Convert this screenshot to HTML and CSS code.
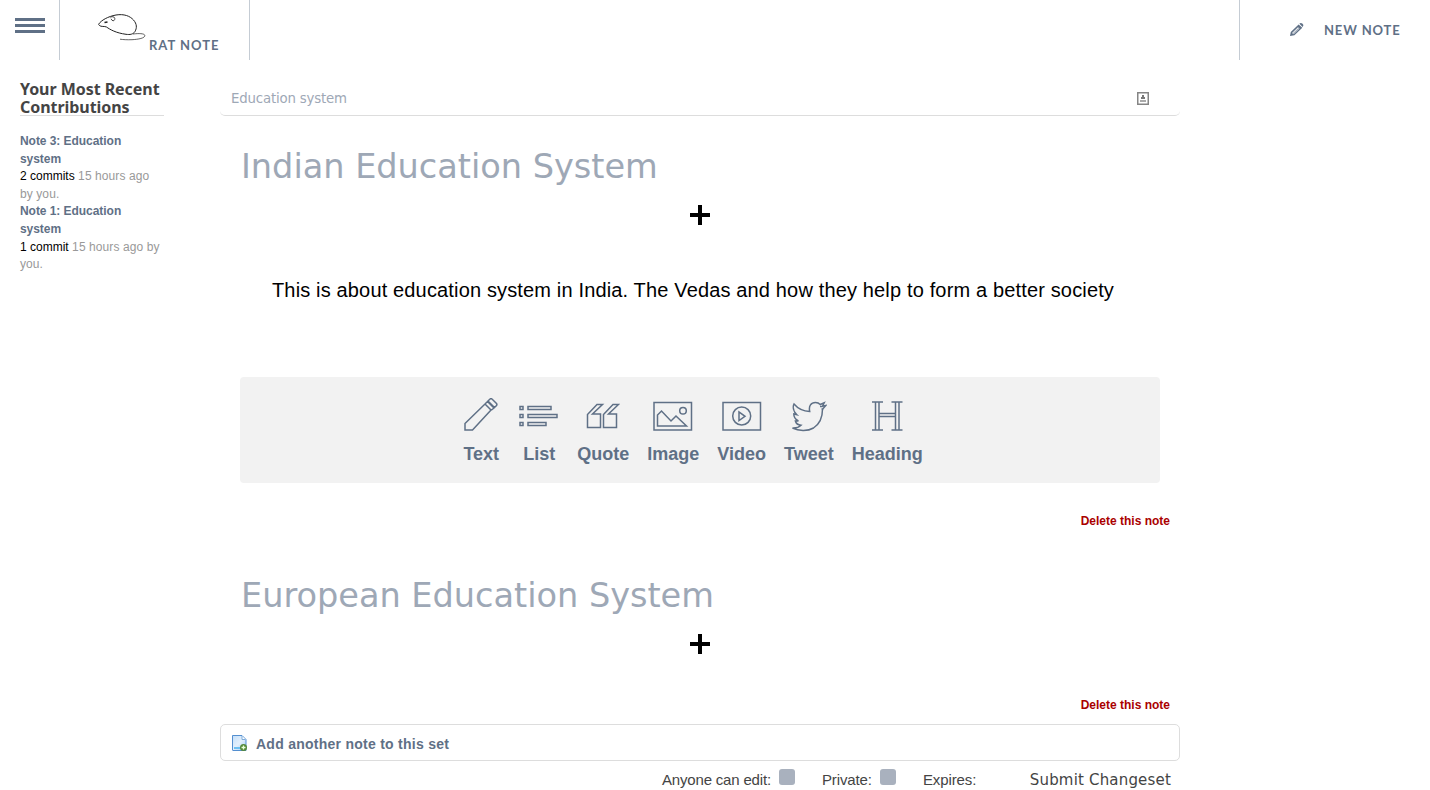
FILE: index.html
```html
<!DOCTYPE html>
<html lang="en">
<head>
<meta charset="utf-8">
<title>Rat Note</title>
<link rel="stylesheet" href="styles.css">
</head>
<body>
<header class="topbar">
  <div class="menu"><i></i><i></i><i></i></div>
  <div class="brand">
    <svg class="rat" width="48" height="28" viewBox="0 0 48 28" fill="none" stroke="#222" stroke-width="1">
      <path d="M.8 10C3 6.500 10 2.400 18 1c8-1.300 14 1 17.500 5 3.500 4 3.500 8 1.500 11.500-2 3-5 3.300-9 2.800C18 19 12 15.500 8.500 13c-2-1-5.500 0-7-1.500C.7 11 .5 10.500.8 10z"/>
      <path d="M12.500 3.500c1-1.300 4-1 4.300.8.2 2-1.300 3.200-2.800 2l-1-1.500" stroke-width=".8"/><path d="M6.500 8.500l3-.5" stroke-width="1.400"/>
      <path d="M35 20c6-.7 11-.6 11.800 1.200.7 3-6.800 4.200-12.800 4.500-5 .2-9-.1-12-.5" stroke-width=".7"/>
    </svg>
    <span class="brand-name">RAT NOTE</span>
  </div>
  <div class="new-note">
    <svg width="14" height="14" viewBox="0 0 14 14"><path fill="#5f7086" fill-rule="evenodd" d="M0 13l.8-4.100L8.600 1.500l3.700 3.300-7.900 7.500zM2 10l1.600 1.300 5.900-5.700-1.500-1.400zM9.400.8c.7-1 2-1 2.900-.2l.6.600c.8.900.5 1.900-.3 2.800z"/><path d="M3 10.600l5.800-5.500" stroke="#5f7086" stroke-width=".7"/></svg>
    <span>NEW NOTE</span>
  </div>
</header>
<div class="page">
  <aside class="sidebar">
    <h2>Your Most Recent Contributions</h2>
    <div class="entry"><b>Note 3: Education system</b><p><span>2 commits</span> 15 hours ago by you.</p></div>
    <div class="entry"><b>Note 1: Education system</b><p><span>1 commit</span> 15 hours ago by you.</p></div>
  </aside>
  <main class="content">
    <div class="set-title"><span>Education system</span>
      <svg width="12" height="13" viewBox="0 0 12 13"><rect x=".75" y=".75" width="10.500" height="11.500" fill="#fff" stroke="#858585" stroke-width="1.500"/><path d="M5 3h2v2h1v2H4V5h1z" fill="#777"/><path d="M3 8h6v2H3z" fill="#aaa"/></svg>
    </div>
    <section class="note first">
      <h1>Indian Education System</h1>
      <div class="plus"></div>
      <p class="body-text">This is about education system in India. The Vedas and how they help to form a better society</p>
      <div class="tools">
        <div class="tool text"><svg width="34" height="34" viewBox="0 0 34 34"><path d="M1 25.500L21 6l6 6L8.500 32H1zM24 3l2-2q1-.7 2 0l4.500 4.500q.8 1 0 2l-2 2zM21.500 5.500l2-2 6.500 6.500-2.500 2"/></svg>Text</div>
        <div class="tool"><svg width="40" height="34" viewBox="0 0 40 34"><path d="M1 8.500h3v3H1zM9 8.500h23v3H9zM1 16.500h3v3H1zM9 16.500h29v3H9zM1 24.500h3v3H1zM9 24.500h18v3H9z"/></svg>List</div>
        <div class="tool"><svg width="34" height="34" viewBox="0 0 34 34"><path d="M1.500 29.500V16.500L11 6.500h5.500L6.500 16h8v13.500zM17.500 29.500V16.500L27 6.500h5.500L22.500 16h8v13.500z"/></svg>Quote</div>
        <div class="tool"><svg width="40" height="34" viewBox="0 0 40 34"><path d="M1 4.500h37.500v27.500H1zM4.500 28V17l4-4L18 23l5-5 10.500 10z"/><circle cx="30" cy="12.800" r="3.300"/></svg>Image</div>
        <div class="tool"><svg width="40" height="34" viewBox="0 0 40 34"><path d="M1 4.500h37.500v27.500H1zM17 14v8.500l6-4.200z"/><circle cx="19.700" cy="18" r="9"/></svg>Video</div>
        <div class="tool"><svg width="36" height="34" viewBox="0 0 36 34"><path d="M1.500 30c4 .2 6.500-.7 8.500-2.700-3-.3-5-2-5.600-4.300h3C4.500 21.500 2.800 19 2.800 16l3 .7C2.500 13.500 1.500 9 3 6c4 4.700 8.500 7.200 15.700 7.500C17.500 8 20 4.500 24.500 4.500c2 0 3.500.7 4.700 2l4-1.700-1.700 3.400 3.300-.7-3.300 3.700C31.500 20 28.500 26 22.500 30c-6 3.500-15 3-21 0zM29 8.500h2.500M30.500 11h2"/></svg>Tweet</div>
        <div class="tool"><svg width="34" height="34" viewBox="0 0 34 34"><path d="M2 4h11M2 32h11M21.500 4h11M21.500 32h11M5.500 4v28M9 4v28M25.500 4v28M29 4v28M9 15.500h16.500M9 18.500h16.500"/></svg>Heading</div>
      </div>
      <div class="delete">Delete this note</div>
    </section>
    <section class="note second">
      <h1>European Education System</h1>
      <div class="plus"></div>
      <div class="delete">Delete this note</div>
    </section>
    <div class="add">
      <svg width="16" height="17" viewBox="0 0 16 17"><defs><linearGradient id="sheet" x2="1" y2="1"><stop stop-color="#c4dff9"/><stop offset=".5" stop-color="#e2effc"/><stop offset="1" stop-color="#a0c9f3"/></linearGradient></defs><path d="M.5.500H10l4 4v11H1q-.5 0-.5-.5z" fill="url(#sheet)" stroke="#548fd0"/><path d="M10 1v3.500h3.500" fill="#fff" stroke="#7facd9"/><path d="M2 12h7v2H2z" fill="#6dc0f2"/><circle cx="11.500" cy="12.500" r="3.500" fill="#548837"/><path d="M9.500 12.500h4M11.500 10.500v4" stroke="#e8ffd8" stroke-width="1.300"/></svg>
      <span>Add another note to this set</span>
    </div>
    <div class="options">
      <span class="anyone">Anyone can edit:</span><i class="check"></i>
      <span class="private">Private:</span><i class="check"></i>
      <span class="expires">Expires:</span>
      <span class="submit">Submit Changeset</span>
    </div>
  </main>
</div>
</body>
</html>
```
FILE: styles.css
```css
* { box-sizing: border-box; }
body { margin: 0; height: 790px; overflow: hidden; background: #fff; font-family: "Liberation Sans", Arial, sans-serif; color: #000; }
h1, h2, p { margin: 0; }
svg { display: block; flex: none; }
.topbar { display: flex; height: 60px; color: #5f7086; font: bold 13px/20px Lato, sans-serif; letter-spacing: 1px; }
.menu { width: 60px; border-right: 1px solid #c5ccd4; padding: 18px 14px 0 15px; display: flex; flex-direction: column; gap: 3px; }
.menu i { height: 3px; background: #5f7086; }
.brand { width: 190px; border-right: 1px solid #c5ccd4; display: flex; padding-left: 37.500px; }
.rat { margin-top: 14px; }
.brand-name { margin: 35px 0 0 3.500px; }
.new-note { margin-left: auto; width: 191px; border-left: 1px solid #c5ccd4; display: flex; padding-left: 50px; gap: 20px; }
.new-note svg { margin-top: 23px; }
.new-note span { margin-top: 20px; letter-spacing: .85px; }
.page { display: flex; }
.sidebar { width: 144px; margin: 20px 56px 0 20px; font-size: 12px; line-height: 17.600px; flex: none; }
.sidebar h2 { font: bold 16px/18px "Noto Sans", "Open Sans", sans-serif; letter-spacing: -.05px; color: #444; border-bottom: 1px solid #ddd; height: 36px; margin-bottom: 17px; }
.entry b { color: #5f7086; display: block; letter-spacing: -.05px; }
.entry p { color: #999; letter-spacing: .09px; }
.entry span { color: #000; letter-spacing: 0; }
.content { width: 960px; flex: none; }
.set-title { height: 36px; margin: 20px 0 0; border-bottom: 1px solid #ddd; border-radius: 5px; display: flex; justify-content: space-between; padding: 11px 31px 0 11px; font: 13.333px/16px "DejaVu Sans", sans-serif; letter-spacing: -.18px; color: #9ea8b6; }
.set-title svg { margin-top: 1px; }
.note { padding: 0 20px; }
.first { height: 429px; padding-top: 31px; }
.second { height: 179px; padding-top: 31px; }
.note h1 { font: 33.600px/40px "DejaVu Sans", sans-serif; padding-left: 1px; letter-spacing: -.03px; color: #9ea8b6; }
.plus { width: 20px; height: 20px; margin: 18px auto 0; background: linear-gradient(#000, #000) center/4px 20px no-repeat, linear-gradient(#000, #000) center/20px 4px no-repeat; }
.body-text { font-size: 20px; line-height: 30px; letter-spacing: .152px; margin: 50px 0 0 32px; white-space: nowrap; }
.tools { margin-top: 72px; height: 106px; background: #f2f2f2; border-radius: 4px; display: flex; justify-content: center; gap: 18px; padding: 21px 16px 0 0; color: #5f7086; font-weight: bold; font-size: 18px; line-height: 22px; }
.tool { display: flex; flex-direction: column; align-items: center; gap: 11px; }
.tool.text { width: 40px; }
.tool svg { fill: none; stroke: #5f7086; stroke-width: 1.500; }
.delete { color: #a00; font-size: 12px; font-weight: bold; line-height: 16px; text-align: right; margin: 30px -10px 0 0; }
.second .delete { margin-top: 43px; }
.add { height: 37px; border: 1px solid #ddd; border-radius: 5px; display: flex; gap: 8px; padding: 10px 11px; color: #5f7086; font-size: 14px; font-weight: bold; line-height: 18px; letter-spacing: .26px; }
.options { display: flex; color: #444; font-size: 15px; line-height: 18px; padding: 10px 9px 0 442px; white-space: nowrap; }
.check { width: 16px; height: 16px; border-radius: 3px; background: #a9b1be; margin: -2px 0 0 8px; }
.anyone { letter-spacing: -.18px; }
.private, .expires { margin-left: 27px; letter-spacing: -.1px; }
.submit { margin-left: auto; font-family: "DejaVu Sans", sans-serif; letter-spacing: .18px; }
```
